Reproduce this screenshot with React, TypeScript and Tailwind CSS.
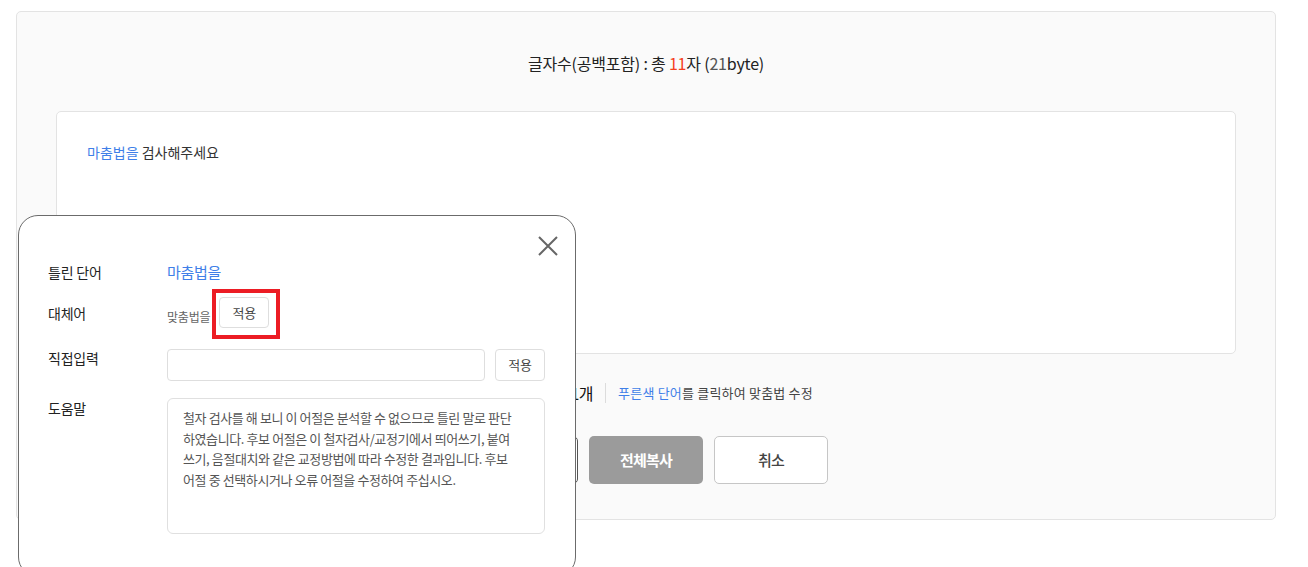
import React from "react";

export default function App() {
  return (
    <div className="relative w-full h-[567px] overflow-hidden bg-white font-['Noto_Sans_CJK_KR',sans-serif] text-[#222]">
      {/* main card */}
      <div className="pt-[11px] pl-[16px]">
        <div className="w-[1260px] h-[509px] rounded-[5px] border border-[#e3e3e3] bg-[#fafafa] px-[39px] flex flex-col">
          <div className="pt-[39px] text-center text-[16px] leading-[24px] tracking-[-0.2px] text-[#222]">
            글자수(공백포함) : 총 <span className="text-[#f5401e]">11</span>자 (<span className="text-[#555]">21</span>byte)
          </div>
          <div className="mt-[36px] h-[243px] rounded-[5px] border border-[#e3e3e3] bg-white pl-[30px] pt-[29px]">
            <p className="text-[14px] leading-[22px] tracking-[0px] text-[#333]">
              <span className="text-[#3f7fe8]">마춤법을</span> 검사해주세요
            </p>
          </div>
          <div className="mt-[27px] flex items-center justify-center">
            <span className="w-[114px] text-right text-[16px] leading-[24px] tracking-[-0.5px] text-[#111]">맞춤법 오류 1개</span>
            <span className="mx-[12px] h-[20px] w-px bg-[#dcdcdc]" />
            <span className="text-[13px] leading-[24px] tracking-[0.2px] text-[#444]">
              <span className="text-[#3f7fe8]">푸른색 단어</span>를 클릭하여 맞춤법 수정
            </span>
          </div>
          <div className="mt-[31px] flex justify-center gap-[11px]">
            <button
              aria-label="다시 검사"
              className="h-[48px] w-[114px] rounded-[5px] border border-[#555] bg-white"
            />
            <button className="h-[48px] w-[114px] rounded-[5px] bg-[#9b9b9b] text-[15px] font-bold tracking-[-0.8px] text-white">
              전체복사
            </button>
            <button className="h-[48px] w-[114px] rounded-[5px] border border-[#c6c6c6] bg-white text-[15px] font-medium tracking-[-0.8px] text-[#444]">
              취소
            </button>
          </div>
        </div>
      </div>

      {/* popup */}
      <div className="absolute left-[18px] top-[215px] w-[558px] h-[362px] rounded-[20px] border border-[#6b6b6b] bg-white pl-[29px] pr-[30px] pt-[44px]">
        <button className="absolute right-[17px] top-[20px] h-[20px] w-[20px]" aria-label="닫기">
          <svg viewBox="0 0 20 20" width="20" height="20" fill="none" stroke="#666" strokeWidth="2">
            <path d="M1 1 L19 19 M19 1 L1 19" />
          </svg>
        </button>

        <div className="flex items-center h-[24px]">
          <div className="w-[119px] text-[14px] leading-[24px] tracking-[-0.2px] text-[#222]">틀린 단어</div>
          <div className="text-[15px] leading-[24px] tracking-[-0.3px] text-[#3f7fe8]">마춤법을</div>
        </div>

        <div className="mt-[13px] flex items-center h-[31px]">
          <div className="w-[119px] text-[14px] leading-[24px] tracking-[-0.2px] text-[#222]">대체어</div>
          <div className="flex items-center gap-[9px]">
            <span className="mt-[9px] text-[12px] leading-[16px] tracking-[-0.2px] text-[#666]">맞춤법을</span>
            <div className="relative">
              <button className="h-[31px] w-[50px] rounded-[4px] border border-[#dedede] bg-white text-[13px] tracking-[-0.2px] text-[#444]">
                적용
              </button>
              <div className="pointer-events-none absolute -left-[7px] -top-[8px] h-[50px] w-[68px] border-[4px] border-[#ec1c24]" />
            </div>
          </div>
        </div>

        <div className="mt-[21px] flex items-start">
          <div className="w-[119px] text-[14px] leading-[18px] tracking-[-0.2px] text-[#222]">직접입력</div>
          <input className="h-[32px] w-[318px] rounded-[4px] border border-[#dedede] bg-white outline-none" />
          <button className="ml-[10px] h-[32px] w-[50px] rounded-[4px] border border-[#dedede] bg-white text-[13px] tracking-[-0.2px] text-[#444]">
            적용
          </button>
        </div>

        <div className="mt-[17px] flex items-start">
          <div className="w-[119px] pt-[1px] text-[14px] leading-[18px] tracking-[-0.2px] text-[#222]">도움말</div>
          <div className="h-[136px] w-[378px] rounded-[6px] border border-[#e0e0e0] bg-white pl-[15px] pr-[4px] pt-[9px] text-[13px] leading-[20.5px] tracking-[-0.4px] text-[#555] whitespace-nowrap">
            철자 검사를 해 보니 이 어절은 분석할 수 없으므로 틀린 말로 판단
            <br />
            하였습니다. 후보 어절은 이 철자검사/교정기에서 띄어쓰기, 붙여
            <br />
            쓰기, 음절대치와 같은 교정방법에 따라 수정한 결과입니다. 후보
            <br />
            어절 중 선택하시거나 오류 어절을 수정하여 주십시오.
          </div>
        </div>
      </div>
    </div>
  );
}
